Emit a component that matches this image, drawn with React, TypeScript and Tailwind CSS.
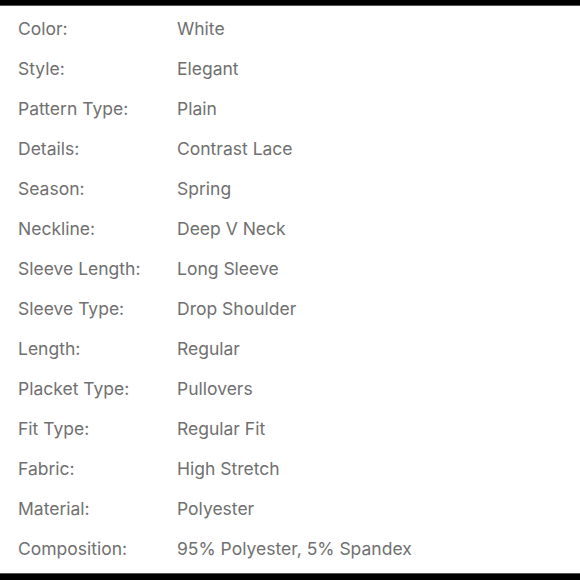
const specs: [string, string][] = [
  ["Color:", "White"],
  ["Style:", "Elegant"],
  ["Pattern Type:", "Plain"],
  ["Details:", "Contrast Lace"],
  ["Season:", "Spring"],
  ["Neckline:", "Deep V Neck"],
  ["Sleeve Length:", "Long Sleeve"],
  ["Sleeve Type:", "Drop Shoulder"],
  ["Length:", "Regular"],
  ["Placket Type:", "Pullovers"],
  ["Fit Type:", "Regular Fit"],
  ["Fabric:", "High Stretch"],
  ["Material:", "Polyester"],
  ["Composition:", "95% Polyester, 5% Spandex"],
];

export default function App() {
  return (
    <div className="w-full h-screen bg-white flex flex-col overflow-hidden font-['Inter',sans-serif]">
      <div className="h-[5px] bg-black shrink-0" />
      <div className="h-px bg-[#555] shrink-0" />
      <div className="flex-1 flex flex-col pt-[3px]">
        {specs.map(([label, value]) => (
          <div key={label} className="flex h-[40px] items-center text-[17.5px] text-[#707070]">
            <span className="w-[177px] pl-[18px] shrink-0">{label}</span>
            <span>{value}</span>
          </div>
        ))}
      </div>
      <div className="h-px bg-[#555] shrink-0" />
      <div className="h-[6px] bg-black shrink-0" />
    </div>
  );
}
